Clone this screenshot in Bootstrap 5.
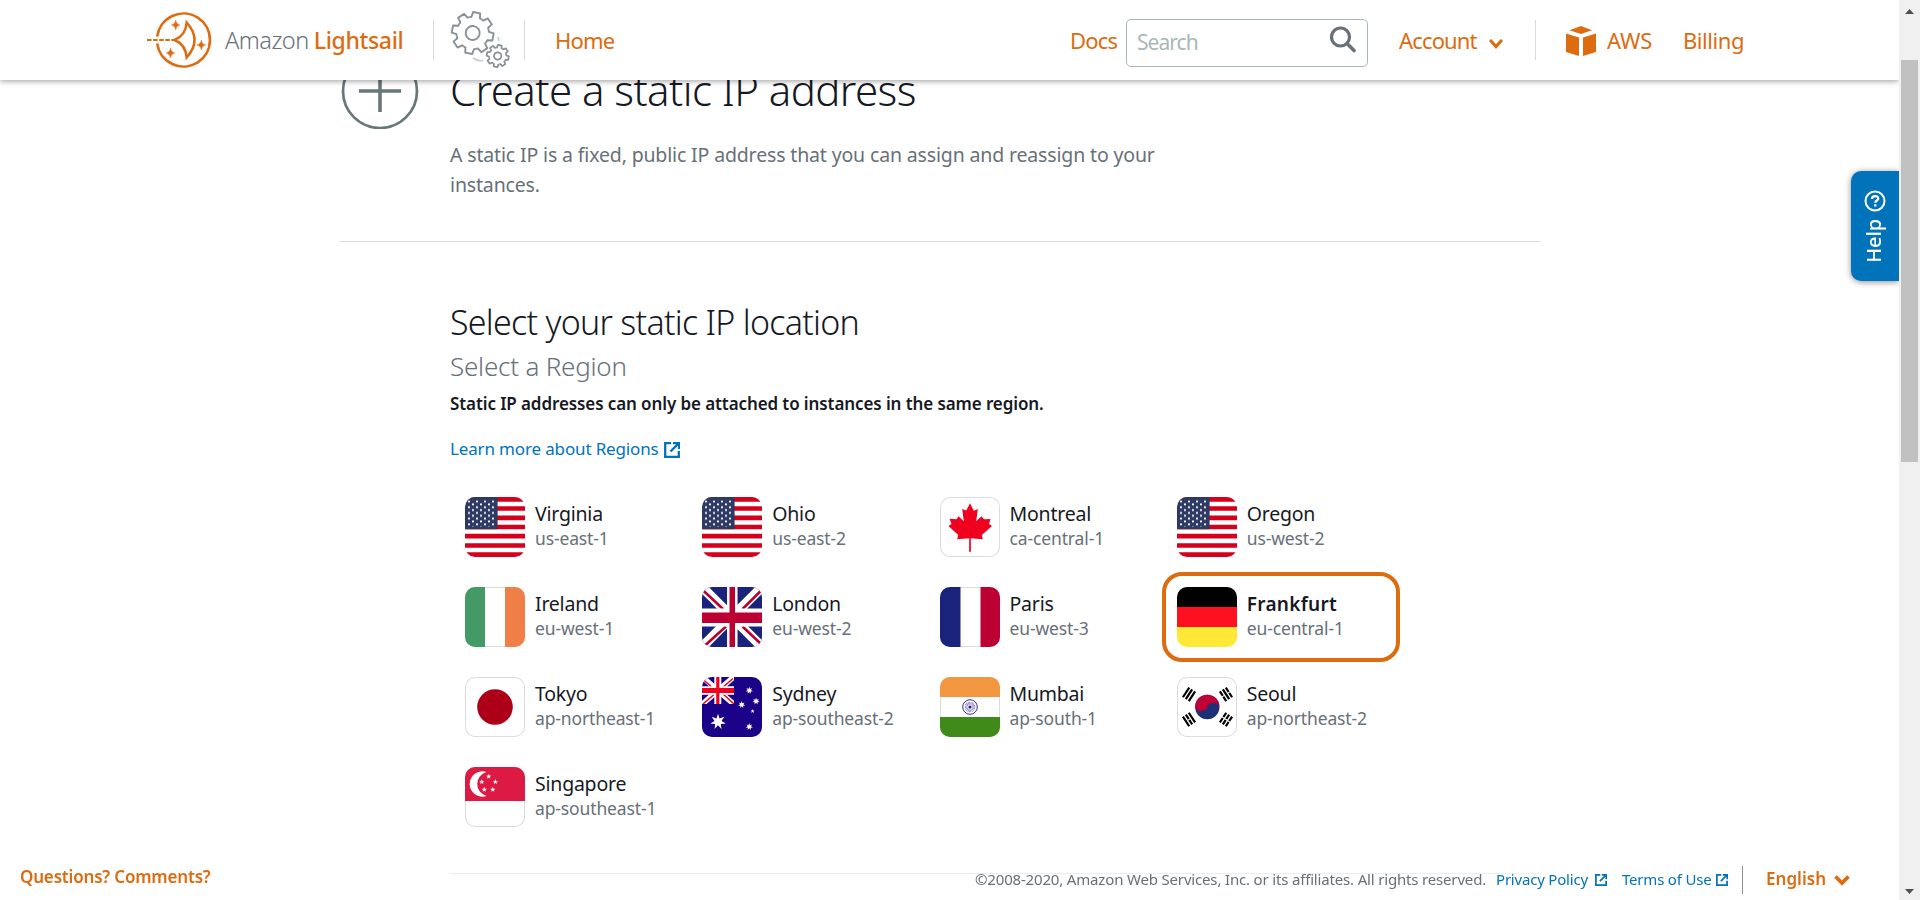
<!DOCTYPE html>
<html lang="en">
<head>
<meta charset="utf-8">
<meta name="viewport" content="width=device-width, initial-scale=1">
<title>Create a static IP address | Amazon Lightsail</title>
<link href="https://cdn.jsdelivr.net/npm/bootstrap@5.3.0/dist/css/bootstrap.min.css" rel="stylesheet">
<style>
:root{--ls-orange:#dd6b10;--ls-gray:#687078;--ls-blue:#0073bb;--ls-ink:#16191f}
body{font-family:"Noto Sans","Open Sans",sans-serif;color:var(--ls-ink);height:900px;overflow:hidden}
a{text-decoration:none}
svg{display:block;flex:none}
.page{width:1899px}
.topbar{height:80px;z-index:5;box-shadow:0 1px 6px rgba(0,0,0,.4);clip-path:inset(0 0 -14px 0)}
.topbar a,.brand-text{color:var(--ls-orange);font-size:22px;line-height:32px;letter-spacing:-.85px;white-space:nowrap;flex:none}
.logo{margin:2px 0 0 146px}
.brand-text{font-size:23px;margin-left:11px;width:208px}
.brand-text .thin{font-size:23.5px;font-weight:300;color:#687078;letter-spacing:-.5px}
.brand-text .thick{font-weight:500;letter-spacing:-.35px}
.vline{width:1px;height:40px;background:#d5dbdb;flex:none}
.searchbox{width:242px;height:48px;border:1px solid #aab7b8;border-radius:5px;padding:0 11px 0 10px;margin-top:6px;flex:none}
.searchbox input{font-size:21px;letter-spacing:-.95px;width:180px;height:40px;margin-top:-2px;color:#687078}
.searchbox input::placeholder{color:#aab7b8;opacity:1}
.intro{width:1200px;margin-left:340px;height:162px;border-bottom:1px solid #d5dbdb}
.intro .plus{margin-top:-27px}
.intro h1{font-size:42px;font-weight:300;line-height:52px;letter-spacing:-.57px;margin:-16px 0 24px}
.intro p{font-size:19.5px;line-height:30px;letter-spacing:-.15px;width:730px;color:var(--ls-gray);margin:0}
.picker{margin:56px 0 0 450px;width:950px}
.picker h2{font-size:34px;font-weight:300;line-height:48px;letter-spacing:-.73px;margin:0}
.picker h3{font-size:26px;font-weight:300;line-height:36px;letter-spacing:-.22px;color:var(--ls-gray);margin:2px 0 0}
.picker .note{font-size:17px;font-weight:600;line-height:24px;letter-spacing:-.1px;margin:8px 0 0}
.learn{font-size:17px;line-height:24px;letter-spacing:-.15px;color:var(--ls-blue);margin:21px 0 21px}
.region{height:90px;border:4px solid transparent;border-radius:20px;padding:11px}
.regions{width:949px}
.region.active{border-color:var(--ls-orange);width:238px}
.region.active .city{font-weight:600;font-size:19px;letter-spacing:.3px}
.flag{width:60px;height:60px;border-radius:10px;overflow:hidden;flex:none}
.flag.pale{box-shadow:inset 0 0 0 1px #dcdcdc}
.label{margin-left:10px}
.city{font-size:19.5px;line-height:24px;letter-spacing:-.22px;margin-top:5px}
.code{font-size:17.5px;line-height:24px;letter-spacing:-.13px;color:var(--ls-gray)}
.helptab{right:21px;top:171px;width:48px;height:110px;background:var(--ls-blue);border-radius:10px 0 0 10px;box-shadow:0 1px 6px rgba(0,0,0,.45);clip-path:inset(-10px 0 -10px -10px);z-index:4}
.helptab span{writing-mode:vertical-rl;transform:rotate(180deg);color:#fff;font-size:20px;font-weight:500;line-height:24px;letter-spacing:-.1px;margin:7px 2px 0 0}
.rule{width:1090px;height:1px;background:#eaeded;margin:31px 0 0 450px}
.foot{height:50px;width:1899px;font-size:15px;letter-spacing:-.2px}
.foot .strong{color:var(--ls-orange);font-size:17px;font-weight:600}
.foot a{color:var(--ls-blue)}
.foot *{white-space:nowrap;flex:none}
.sbar{width:21px;height:900px;background:#f0f0f0}
.thumb{width:17px;height:402px;background:#c1c1c1}
</style>
</head>
<body class="bg-white d-flex">
<svg width="0" height="0" class="position-absolute" aria-hidden="true">
<defs>
<symbol id="ext" viewBox="0 0 16 16"><path d="M7 1.2H1.2v13.6h13.6V9M9 1.1h6v6M14.6 1.4L6.5 9.5" fill="none" stroke="#0073bb" stroke-width="2.3"/></symbol>
<pattern id="dots" width="8" height="5.7" x="2" y="3.2" patternUnits="userSpaceOnUse"><circle cx="2" cy="1.4" r="1.05" fill="#fff"/><circle cx="6" cy="4.2" r="1.05" fill="#fff"/></pattern>
<symbol id="us" viewBox="0 0 60 60"><path fill="#fff" d="M0 0h60v60H0z"/><path d="M0 2.3h60M0 11.5h60M0 20.8h60M0 30h60M0 39.2h60M0 48.5h60M0 57.7h60" stroke="#d5001c" stroke-width="4.7"/><path fill="#2e3a63" d="M0 0h32.6v32.3H0z"/><path fill="url(#dots)" d="M2 3.2h29v26.4H2z"/></symbol>
<symbol id="ca" viewBox="0 0 60 60"><path fill="#f0001e" d="M30 6.3l3.800 7.400 4-1.600-1.600 12.200 5.300-5 2.500 3 6.500-.4-1.500 5 3 2.200-10.200 8.900 1 4.200-12-.9.1 13.400h-1.800l.1-13.400-12 .9 1-4.200L8.500 29.100l3-2.200-2-5.200 7 .5 2-3 5.300 5-1.600-12.200 4 1.600z"/></symbol>
<symbol id="ie" viewBox="0 0 60 60"><path fill="#439a67" d="M0 0h20v60H0z"/><path fill="#f07f47" d="M40 0h20v60H40z"/></symbol>
<symbol id="gb" viewBox="0 0 60 60"><path fill="#1a237b" d="M0 0h60v60H0z"/><path d="M0 0l60 60M60 0L0 60" stroke="#fff" stroke-width="9.500"/><path d="M1.500 3.800L21 22M59 3.800L40.500 22M3.500 58L24 39.500M40.500 39.500L59 57" stroke="#bd0034" stroke-width="2.600"/><path d="M30.300 0v60" stroke="#fff" stroke-width="10.500"/><path fill="#fff" d="M0 21.500h60v18H0z"/><path fill="#bd0034" d="M27.500 0h5.500v60h-5.500zM0 25.500h60v10.500H0z"/></symbol>
<symbol id="fr" viewBox="0 0 60 60"><path fill="#1a237b" d="M0 0h20.500v60H0z"/><path fill="#bd0034" d="M40.500 0H60v60H40.500z"/></symbol>
<symbol id="de" viewBox="0 0 60 60"><path d="M0 0h60v20H0z"/><path fill="#ff1020" d="M0 20h60v20H0z"/><path fill="#ffe936" d="M0 40h60v20H0z"/></symbol>
<symbol id="jp" viewBox="0 0 60 60"><circle cx="30" cy="30" r="17.800" fill="#ad0018"/></symbol>
<symbol id="s7" viewBox="-1 -1 2 2"><path fill="#fff" d="M0-1L.195-.405.782-.623.439-.1.975.223.352.281.434.901 0 .45-.434.901-.352.281-.975.223-.439-.1-.782-.623-.195-.405z"/></symbol>
<symbol id="s5" viewBox="-1 -1 2 2"><path fill="#fff" d="M0-1L.235-.324.951-.309.38.124.588.809 0 .4-.588.809-.38.124-.951-.309-.235-.324z"/></symbol>
<symbol id="au" viewBox="0 0 60 60"><path fill="#1b0088" d="M0 0h60v60H0z"/><svg width="32" height="27" viewBox="0 0 32 27"><path d="M-2-2l36 31M34-2L-2 29" stroke="#fff" stroke-width="5.500"/><path d="M0 1.500L12 12M31 1.500L20 11M1 27l11-9.500M20 16l12 11" stroke="#f0001e" stroke-width="1.500"/><path d="M15.800 0v27" stroke="#fff" stroke-width="7"/><path d="M0 13.500h32" stroke="#fff" stroke-width="8.500"/><path d="M15.800 0v27" stroke="#f0001e" stroke-width="3.200"/><path d="M0 13.500h32" stroke="#f0001e" stroke-width="5"/></svg><use href="#s7" x="8" y="36.700" width="16" height="16"/><use href="#s7" x="43.600" y="9.700" width="7.400" height="7.400"/><use href="#s7" x="36" y="24" width="7.400" height="7.400"/><use href="#s7" x="50.400" y="20.500" width="7.400" height="7.400"/><use href="#s7" x="43.600" y="46" width="7.400" height="7.400"/><use href="#s5" x="48.400" y="32" width="4.400" height="4.400"/></symbol>
<symbol id="in" viewBox="0 0 60 60"><path fill="#f39640" d="M0 0h60v20H0z"/><path fill="#3f8a18" d="M0 40h60v20H0z"/><g fill="none" stroke="#23148c"><circle cx="30" cy="30" r="7.300" stroke-width=".9"/><circle cx="30" cy="30" r="3.800" stroke-width="3" stroke-dasharray=".6 .6" opacity=".65"/></g><circle cx="30" cy="30" r="1.600" fill="#23148c"/></symbol>
<g id="tri"><path d="M-5.800-3.500H5.800M-5.800 0H5.800M-5.800 3.500H5.800" stroke="#000" stroke-width="2.200"/></g>
<symbol id="kr" viewBox="0 0 60 60"><circle cx="30.300" cy="30" r="12.200" fill="#1d3077"/><path fill="#c10035" d="M18.100 30a12.200 12.200 0 0 1 24.400 0A6.100 4 0 0 0 30.300 30 6.100 4 0 0 1 18.100 30z"/><use href="#tri" transform="translate(12 17.300) rotate(-57)"/><g transform="translate(49 17.300) rotate(57)"><use href="#tri"/><path d="M0-5v3M0 2v3" stroke="#fff"/></g><g transform="translate(12 42.500) rotate(57)"><use href="#tri"/><path d="M0-1.700v3.400" stroke="#fff"/></g><g transform="translate(49 42.500) rotate(-57)"><use href="#tri"/><path d="M0-5V5" stroke="#fff"/></g></symbol>
<symbol id="sg" viewBox="0 0 60 60"><path fill="#dc1a43" d="M0 0h60v34H0z"/><path fill="#fff" d="M21.500 5A12.700 12.700 0 1 0 21.500 29A12.400 12.400 0 0 1 21.500 5z"/><use href="#s5" x="20.900" y="6.700" width="5.600" height="5.600"/><use href="#s5" x="14" y="12" width="5.600" height="5.600"/><use href="#s5" x="27.600" y="12" width="5.600" height="5.600"/><use href="#s5" x="16.500" y="19.800" width="5.600" height="5.600"/><use href="#s5" x="25" y="19.800" width="5.600" height="5.600"/></symbol>
<g id="tooth"><path d="M-6.200-15A16.200 16.200 0 0 1-4.300-15.700L-3.600-20.700H3.600L4.300-15.700A16.200 16.200 0 0 1 6.200-15" fill="none" stroke="#879196" vector-effect="non-scaling-stroke" stroke-linejoin="round"/></g>
<g id="gear"><use href="#tooth"/><use href="#tooth" transform="rotate(45)"/><use href="#tooth" transform="rotate(90)"/><use href="#tooth" transform="rotate(135)"/><use href="#tooth" transform="rotate(180)"/><use href="#tooth" transform="rotate(225)"/><use href="#tooth" transform="rotate(270)"/><use href="#tooth" transform="rotate(315)"/><circle r="7" fill="none" stroke="#879196" vector-effect="non-scaling-stroke"/></g>
<path id="spark" d="M0-5Q.6-.6 4.500 0 .6.600 0 5-.6.600-4.500 0-.6-.6 0-5z" fill="#dd6b10" stroke="#dd6b10" stroke-width=".4"/>
</defs>
</svg>

<div class="page flex-shrink-0">
<header class="topbar bg-white position-relative d-flex align-items-center">
  <svg class="logo" width="68" height="60" viewBox="0 0 68 60" fill="none" stroke="#dd6b10"><path d="M11.200 25.500a26.500 26.500 0 1 1 0 7" stroke-width="2.600"/><path d="M1 29h27" stroke-width="2.200" stroke-dasharray="4.500 1.600"/><path d="M40.700 11.500C40 20 36 26 28.500 29 36 32 40 38 40.700 46.500 51 35 51 23 40.700 11.500z" stroke-width="2.500"/><use href="#spark" x="29.700" y="14"/><use href="#spark" x="55.300" y="34"/><use href="#spark" x="24.500" y="42"/></svg>
  <div class="brand-text"><span class="thin">Amazon</span> <span class="thick">Lightsail</span></div>
  <div class="vline"></div>
  <svg class="ms-3" width="62" height="60" viewBox="0 0 62 60"><g stroke-width="1.900"><use href="#gear" transform="translate(22.700 23) rotate(11)"/><g stroke-width="1.700"><use href="#gear" transform="translate(47.700 46) rotate(11) scale(.53)"/></g></g><path d="M23 48q4 3 10 2.800M48 27l1 4" stroke="#ccc" stroke-width="1.600" fill="none"/></svg>
  <div class="vline" style="margin-left:12px"></div>
  <a href="#" style="margin-left:30px;width:515px">Home</a>
  <a href="#" style="width:56px">Docs</a>
  <div class="searchbox d-flex align-items-center justify-content-between"><input class="border-0 p-0 bg-transparent" placeholder="Search" aria-label="Search"><svg width="28" height="28" viewBox="0 0 28 28" fill="none" stroke="#687078" style="margin-top:-9px"><circle cx="12.500" cy="12" r="9" stroke-width="3.200"/><path d="M19 18.500l7 7" stroke-width="3.600" stroke-linecap="round"/></svg></div>
  <a href="#" style="margin-left:31px;width:90px">Account</a>
  <svg width="14" height="12" viewBox="0 0 14 12" style="margin-top:7px"><path d="M2 3l5 5.500L12 3" fill="none" stroke="#dd6b10" stroke-width="3.200" stroke-linecap="round"/></svg>
  <div class="vline" style="margin-left:32px"></div>
  <svg width="30" height="30" viewBox="0 0 30 30" fill="#dd6b10" style="margin:2px 0 0 30px"><path d="M15 0l11 4.200L15 8 3.500 4.200zM0 7.500l13 4V30L0 26zM30 7.500l-13 4V30l13-4z"/></svg>
  <a href="#" style="margin-left:11px;width:76px;letter-spacing:-.2px">AWS</a>
  <a href="#" style="letter-spacing:-.45px">Billing</a>
</header>

<main>
  <section class="intro d-flex">
    <svg class="plus" width="80" height="76" viewBox="0 0 80 76" fill="none" stroke="#687778"><circle cx="40" cy="38" r="37" stroke-width="2.700"/><path d="M19 38h42M40 17v42" stroke-width="3.600"/></svg>
    <div style="margin-left:30px"><h1>Create a static IP address</h1><p>A static IP is a fixed, public IP address that you can assign and reassign to your instances.</p></div>
  </section>
  <section class="picker">
    <h2>Select your static IP location</h2>
    <h3>Select a Region</h3>
    <p class="note">Static IP addresses can only be attached to instances in the same region.</p>
    <a href="#" class="learn d-flex align-items-center">Learn more about Regions<svg width="16" height="16" style="margin:2px 0 0 5px"><use href="#ext"/></svg></a>
    <div class="regions row row-cols-4 g-0">
      <div class="col region d-flex"><svg class="flag"><use href="#us"/></svg><div class="label"><div class="city">Virginia</div><div class="code">us-east-1</div></div></div>
      <div class="col region d-flex"><svg class="flag"><use href="#us"/></svg><div class="label"><div class="city">Ohio</div><div class="code">us-east-2</div></div></div>
      <div class="col region d-flex"><svg class="flag pale"><use href="#ca"/></svg><div class="label"><div class="city">Montreal</div><div class="code">ca-central-1</div></div></div>
      <div class="col region d-flex"><svg class="flag"><use href="#us"/></svg><div class="label"><div class="city">Oregon</div><div class="code">us-west-2</div></div></div>
      <div class="col region d-flex"><svg class="flag pale"><use href="#ie"/></svg><div class="label"><div class="city">Ireland</div><div class="code">eu-west-1</div></div></div>
      <div class="col region d-flex"><svg class="flag"><use href="#gb"/></svg><div class="label"><div class="city">London</div><div class="code">eu-west-2</div></div></div>
      <div class="col region d-flex"><svg class="flag pale"><use href="#fr"/></svg><div class="label"><div class="city">Paris</div><div class="code">eu-west-3</div></div></div>
      <div class="col region active d-flex" style="margin-right:-1px"><svg class="flag"><use href="#de"/></svg><div class="label"><div class="city">Frankfurt</div><div class="code">eu-central-1</div></div></div>
      <div class="col region d-flex"><svg class="flag pale"><use href="#jp"/></svg><div class="label"><div class="city">Tokyo</div><div class="code">ap-northeast-1</div></div></div>
      <div class="col region d-flex"><svg class="flag"><use href="#au"/></svg><div class="label"><div class="city">Sydney</div><div class="code">ap-southeast-2</div></div></div>
      <div class="col region d-flex"><svg class="flag pale"><use href="#in"/></svg><div class="label"><div class="city">Mumbai</div><div class="code">ap-south-1</div></div></div>
      <div class="col region d-flex"><svg class="flag pale"><use href="#kr"/></svg><div class="label"><div class="city">Seoul</div><div class="code">ap-northeast-2</div></div></div>
      <div class="col region d-flex"><svg class="flag pale"><use href="#sg"/></svg><div class="label"><div class="city">Singapore</div><div class="code">ap-southeast-1</div></div></div>
    </div>
  </section>
  <div class="rule"></div>
</main>
</div>

<aside class="sbar d-flex flex-column align-items-center flex-shrink-0">
  <svg width="21" height="60"><path d="M6 14l4.500-5 4.500 5z" fill="#505050"/></svg>
  <div class="thumb"></div>
  <svg class="mt-auto" width="21" height="20"><path d="M6 9h9l-4.500 5z" fill="#505050"/></svg>
</aside>

<a href="#" class="helptab position-fixed d-flex flex-column align-items-center">
  <svg width="22" height="22" viewBox="0 0 22 22" fill="none" stroke="#fff" style="margin-top:19px"><circle cx="11" cy="11" r="9.500" stroke-width="2"/><path d="M8 9c0-4 6.300-3.700 6.300-.5 0 2-3 2-3 4.200M11.300 14.300v2.300" stroke-width="2.300"/></svg>
  <span>Help</span>
</a>

<footer class="foot position-fixed bottom-0 start-0 d-flex align-items-center">
  <a href="#" class="strong" style="margin-left:20px;width:955px;letter-spacing:-.18px;margin-top:4px">Questions? Comments?</a>
  <div class="d-flex align-items-center" style="margin-top:9px">
    <span style="width:521px;color:#687078;letter-spacing:-.17px">©2008-2020, Amazon Web Services, Inc. or its affiliates. All rights reserved.</span>
    <a href="#" style="width:99px">Privacy Policy</a><svg width="12" height="12"><use href="#ext"/></svg>
    <a href="#" style="margin-left:15px;width:94px">Terms of Use</a><svg width="12" height="12"><use href="#ext"/></svg>
    <div style="width:1px;height:28px;background:#879196;margin-left:14px"></div>
    <a href="#" class="strong" style="margin-left:23px;width:68px;letter-spacing:.05px;margin-top:-2px">English</a>
    <svg width="16" height="12" viewBox="0 0 16 12"><path d="M1.500 2.500L8 9l6.500-6.500" fill="none" stroke="#dd6b10" stroke-width="3.800"/></svg>
  </div>
</footer>
<script src="https://cdn.jsdelivr.net/npm/bootstrap@5.3.0/dist/js/bootstrap.bundle.min.js"></script>
</body>
</html>
